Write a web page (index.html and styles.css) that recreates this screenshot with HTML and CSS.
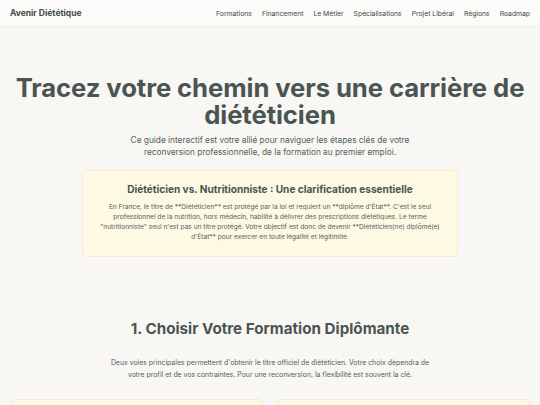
FILE: index.html
```html
<!DOCTYPE html>
<html lang="fr">
<head>
<meta charset="utf-8">
<title>Avenir Diététique</title>
<link rel="stylesheet" href="styles.css">
</head>
<body>
<header class="topbar">
  <div class="brand">Avenir Diététique</div>
  <nav class="nav">
    <span class="nav-link">Formations</span>
    <span class="nav-link">Financement</span>
    <span class="nav-link">Le Métier</span>
    <span class="nav-link">Spécialisations</span>
    <span class="nav-link">Projet Libéral</span>
    <span class="nav-link">Régions</span>
    <span class="nav-link">Roadmap</span>
  </nav>
</header>
<main class="main">
  <section class="hero">
    <h1 class="hero-title">Tracez votre chemin vers une carrière de diététicien</h1>
    <p class="hero-sub">Ce guide interactif est votre allié pour naviguer les étapes clés de votre reconversion professionnelle, de la formation au premier emploi.</p>
    <div class="note">
      <h2 class="note-title">Diététicien vs. Nutritionniste : Une clarification essentielle</h2>
      <p class="note-text">En France, le titre de **Diététicien** est protégé par la loi et requiert un **diplôme d'État**. C'est le seul professionnel de la nutrition, hors médecin, habilité à délivrer des prescriptions diététiques. Le terme "nutritionniste" seul n'est pas un titre protégé. Votre objectif est donc de devenir **Diététicien(ne) diplômé(e) d'État** pour exercer en toute légalité et légitimité.</p>
    </div>
  </section>
  <section class="section">
    <h2 class="section-title">1. Choisir Votre Formation Diplômante</h2>
    <p class="section-sub">Deux voies principales permettent d'obtenir le titre officiel de diététicien. Votre choix dépendra de votre profil et de vos contraintes. Pour une reconversion, la flexibilité est souvent la clé.</p>
    <div class="cards">
      <div class="card"></div>
      <div class="card"></div>
    </div>
  </section>
</main>
</body>
</html>
```
FILE: styles.css
```css
* { box-sizing: border-box; }
html, body { margin: 0; padding: 0; }
body {
  background: #f8f7f4;
  font-family: Inter, "Noto Sans", sans-serif;
  color: #4a5553;
  overflow: hidden;
  height: 405px;
}
.topbar {
  height: 26px;
  background: #fcfbf9;
  box-shadow: 0 1px 2px rgba(0,0,0,0.05);
  display: flex;
  align-items: center;
  justify-content: space-between;
  padding: 0 10px;
}
.brand {
  font-weight: 700;
  font-size: 8.5px;
  color: #3f4a48;
}
.nav {
  display: flex;
  gap: 10px;
}
.nav-link {
  font-size: 6.8px;
  color: #3f4846;
}
.main {
  padding-top: 48px;
}
.hero {
  display: flex;
  flex-direction: column;
  align-items: center;
  text-align: center;
}
.hero-title {
  margin: 0;
  font-size: 25.7px;
  line-height: 27px;
  font-weight: 700;
  max-width: 520px;
  color: #4a5553;
  letter-spacing: -0.1px;
}
.hero-sub {
  margin: 6px 0 0;
  font-size: 8.3px;
  line-height: 12px;
  max-width: 300px;
  color: #555e5c;
}
.note {
  margin-top: 12px;
  width: 376px;
  background: #fef9e3;
  border: 1px solid #f3ebcb;
  border-radius: 5px;
  padding: 11px 12px 14px;
}
.note-title {
  margin: 0;
  font-size: 10.1px;
  line-height: 14px;
  font-weight: 700;
  color: #4a5553;
}
.note-text {
  margin: 6px 0 0;
  font-size: 6.6px;
  line-height: 10px;
  color: #555e5c;
}
.section {
  margin-top: 62px;
  display: flex;
  flex-direction: column;
  align-items: center;
  text-align: center;
}
.section-title {
  margin: 0;
  font-size: 15.2px;
  line-height: 20px;
  font-weight: 700;
  color: #4a5553;
}
.section-sub {
  margin: 18px 0 0;
  font-size: 6.9px;
  line-height: 11.5px;
  max-width: 330px;
  color: #555e5c;
}
.cards {
  margin-top: 19px;
  width: 100%;
  padding: 0 10px;
  display: grid;
  grid-template-columns: 1fr 1fr;
  gap: 14px;
}
.card {
  height: 80px;
  background: #fef9e3;
  border: 1px solid #f3ebcb;
  border-radius: 5px;
}
```
